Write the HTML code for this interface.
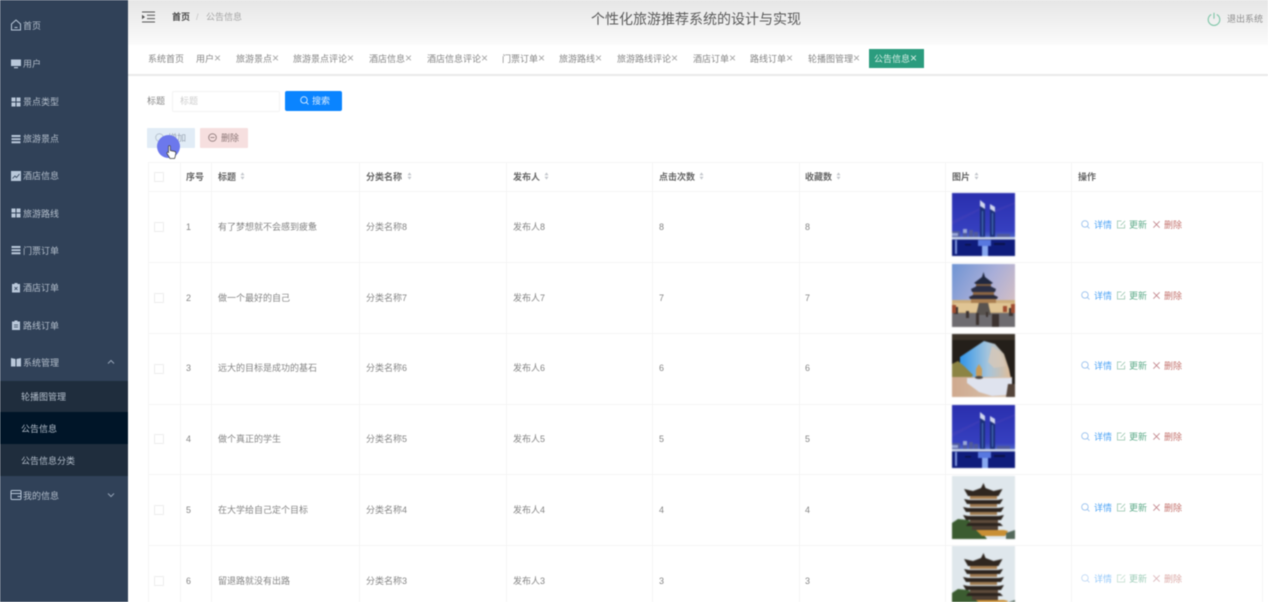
<!DOCTYPE html>
<html lang="zh"><head><meta charset="utf-8"><title>公告信息</title>
<style>
html,body{margin:0;padding:0;width:1268px;height:602px;overflow:hidden;background:#fff}
#p{position:relative;width:1268px;height:602px;overflow:hidden;font-family:"Liberation Sans","Noto Sans CJK SC",sans-serif;font-size:9px;color:#7d7d7d;filter:blur(.5px)}
#p div,#p span,#p svg{position:absolute}
.t{line-height:12px;white-space:nowrap}
.t i{font-style:normal;font-size:12px;color:#a5a5a5}
.m{color:#b3becb;font-size:9px;left:23px;margin-top:1px}
.s{color:#b3becb;font-size:9px;left:21px;margin-top:1px}
.tab{top:52px;color:#858585;font-size:9px}
.h{top:171px;color:#666;font-weight:bold;font-size:9px}
.c{color:#858585;font-size:9px}
.v{width:1px;background:#f5f5f5;top:162px;height:440px}
.l{left:148px;width:1114px;height:1px;background:#f5f5f5}
.cb{left:154px;width:8px;height:8px;border:1px solid #ececec;border-radius:1px;background:#fff}
.b{color:#4da3f5}.g{color:#62ad8c}.r{color:#c4746f}
.bi{color:#9cc2ee}.gi{color:#a3cbb6}.ri{color:#c48a90}
.so{width:5px;height:8px}
.im{filter:blur(.6px)}
</style></head><body><div id="p">
<svg width="0" height="0" style="left:0;top:0"><defs>
<linearGradient id="cs" x1="0" y1="0" x2="0" y2="1"><stop offset="0" stop-color="#2a2fae"/><stop offset=".6" stop-color="#3640c0"/><stop offset=".73" stop-color="#5570c8"/></linearGradient>
<linearGradient id="ts" x1="0" y1="0" x2="1" y2=".6"><stop offset="0" stop-color="#6f94d4"/><stop offset=".55" stop-color="#a9aed8"/><stop offset="1" stop-color="#d4bfc4"/></linearGradient>
<linearGradient id="as" x1="0" y1="0" x2="1" y2="0"><stop offset="0" stop-color="#2f95ea"/><stop offset=".55" stop-color="#a6c5dc"/><stop offset="1" stop-color="#e0bd98"/></linearGradient>
<linearGradient id="ab" x1="0" y1="0" x2="1" y2="0"><stop offset="0" stop-color="#cfa98e"/><stop offset="1" stop-color="#d9c6b2"/></linearGradient>
<symbol id="city" viewBox="0 0 63 63"><rect width="63" height="63" fill="url(#cs)"/><path d="M0 28L30 14v2L0 32zM40 18l23-9v2L40 21z" fill="#5a48b8" opacity=".25"/><rect y="46" width="63" height="17" fill="#0f1c7c"/><path d="M28 8l5 4v33h-5zM38 12l5 3v30h-5z" fill="#1b2f78"/><path d="M28 7l5 4v5l-5-3zM38 11l5 3v5l-5-3z" fill="#d0d6ee"/><path d="M30 18h1v25h-1zM40 20h1v22h-1z" fill="#4b78c8"/><path d="M0 38h8v7H0zM11 36h4v9h-4zM17 37h4v8h-4zM22 39h4v6h-4zM45 41h13v4H45z" fill="#4f5a9c"/><path d="M11 36h4v4h-4zM0 40h6v3H0z" fill="#9aa8d8"/><rect y="44" width="63" height="2.500" fill="#c8d4ea"/><rect x="30" y="47" width="6" height="16" fill="#88a8f0"/><rect x="26" y="47" width="13" height="6" fill="#5878e0"/><rect x="13" y="51" width="6" height="1.500" fill="#0b1248"/><rect x="42" y="50" width="11" height="2" fill="#0b1248"/><rect x="3" y="47" width="2" height="14" fill="#7f96e0"/></symbol>
<symbol id="temple" viewBox="0 0 63 63"><rect width="63" height="63" fill="url(#ts)"/><rect y="36" width="63" height="14" fill="#cdae7c"/><rect y="49" width="63" height="14" fill="#6e6c70"/><path d="M31.500 8l1.500 5 8 6-2 1H24l-2-1 8-6z" fill="#20273e"/><rect x="24" y="20" width="15" height="3" fill="#7a5a3e"/><path d="M19 25l6-3h13l6 3-1 3H20z" fill="#2a2e44"/><rect x="21" y="28" width="21" height="3" fill="#8a6544"/><path d="M17 33l4-2h21l4 2-1 2H18z" fill="#2c2d3e"/><rect x="19" y="35" width="25" height="4" fill="#a97e50"/><rect x="2" y="39" width="24" height="9" fill="#e0c594"/><rect x="37" y="39" width="24" height="9" fill="#e0c594"/><path d="M27 39h9l3 12H24z" fill="#58534f"/><path d="M2 43h4v7H2zM14 47h3v7h-3zM24 49h3v12h-3zM40 50h7v13h-7zM57 44h4v8h-4zM34 48h2v5h-2z" fill="#3c3330"/><path d="M0 41h4v8H0zM59 40h4v9h-4zM51 42h4v6h-4z" fill="#a04c30"/></symbol>
<symbol id="arch" viewBox="0 0 63 63"><rect width="63" height="63" fill="#241f1a"/><path d="M0 0h63v6H0z" fill="#3a3229"/><path d="M8 23L32 7l11 3 9 10 5 15 2 10H8z" fill="url(#as)"/><path d="M40 12l8 6 6 14-12 2-6-6z" fill="#d8c8b8" opacity=".75"/><path d="M0 30l6-3 6 5 9 9-2 3H0z" fill="#8c8444"/><path d="M0 43h60v8l-4 12H0z" fill="url(#ab)"/><path d="M15 44h45v8l-6 9-14 1-13-4-12-9z" fill="#dfe3ee"/><path d="M24 35l3-5 3 5v7h-6z" fill="#c89c58"/><ellipse cx="27" cy="43.500" rx="4" ry="1.500" fill="#4c443e"/><path d="M56 50h7v13h-9z" fill="#54443a"/></symbol>
<symbol id="tower" viewBox="0 0 63 63"><rect width="63" height="63" fill="#dfe7ec"/><path d="M0 47l6-4 10 1 8 5 11 14H0z" fill="#3b5c30"/><path d="M31.500 7l2 5 8 3 9-2-4 7H16l-4-7 9 2 8-3z" fill="#2f261f"/><rect x="18" y="20" width="27" height="3" fill="#a77f52"/><path d="M12 23l5 1h29l5-1-3 5H15z" fill="#2c241e"/><rect x="18" y="28" width="27" height="3" fill="#9b774f"/><path d="M11 31l5 1h31l5-1-3 5H14z" fill="#2c241e"/><rect x="18" y="36" width="27" height="3" fill="#a07c52"/><path d="M11 39l5 1h31l5-1-3 5H14z" fill="#2c241e"/><rect x="18" y="44" width="28" height="3" fill="#5d4a3a"/><path d="M16 47h32l3 3H14z" fill="#2c241e"/><rect x="20" y="50" width="26" height="4" fill="#4d3e33"/><path d="M24 54h28l4 1-3 5H30z" fill="#c98f34"/><path d="M54 57l9-3v9H54z" fill="#53685a"/></symbol>
<symbol id="sr" viewBox="0 0 10 10"><circle cx="4.400" cy="4.400" r="3.600" fill="none" stroke="currentColor" stroke-width="1"/><path d="M7 7l2.400 2.400" stroke="currentColor" stroke-width="1"/></symbol>
<symbol id="ed" viewBox="0 0 10 10"><path d="M8.500 5v4h-8v-8h4.500" fill="none" stroke="currentColor" stroke-width="1"/><path d="M4 6l5-5" stroke="currentColor" stroke-width="1"/></symbol>
<symbol id="xx" viewBox="0 0 10 10"><path d="M1.500 1.500l7 7M8.500 1.500l-7 7" stroke="currentColor" stroke-width="1"/></symbol>
<symbol id="st" viewBox="0 0 6 10"><path d="M3 .5l2.500 3.500h-5z" fill="#c4c7cc"/><path d="M3 9.500l2.500-3.500h-5z" fill="#c4c7cc"/></symbol>
<symbol id="gr" viewBox="0 0 10 10"><path d="M.5.5h4v4h-4zM5.500.5h4v4h-4zM.5 5.500h4v4h-4zM5.500 5.500h4v4h-4z" fill="#b9c8da"/></symbol>
<symbol id="ls" viewBox="0 0 10 10"><path d="M.5 1h9v2h-9zM.5 4.200h9v1.800h-9zM.5 7.300h9v2h-9z" fill="#b9c8da"/></symbol>
<symbol id="cp" viewBox="0 0 10 10"><path d="M1 1.500h2.500V.5h3v1H9v8.500H1z" fill="#b9c8da"/><path d="M3.500 4.500l3 3M6.500 4.500l-3 3" stroke="#304158" stroke-width=".8"/></symbol>
</defs></svg>

<!-- sidebar -->
<div style="left:0;top:0;width:128px;height:602px;background:#304158"></div>
<div style="left:0;top:381px;width:128px;height:31px;background:#1f2d3d"></div>
<div style="left:0;top:412px;width:128px;height:32px;background:#001528"></div>
<div style="left:0;top:444px;width:128px;height:32px;background:#1f2d3d"></div>

<svg style="left:10px;top:19px" width="12" height="12" viewBox="0 0 12 12"><path d="M1.500 5L6 1l4.500 4v6h-9zM4.500 8.500h3" fill="none" stroke="#b9c8da" stroke-width="1"/></svg>
<svg style="left:11px;top:59px" width="10" height="10" viewBox="0 0 10 10"><path d="M0 .5h10v6.500H0zM3 8h4v1.200H3z" fill="#b9c8da"/></svg>
<svg style="left:11px;top:97px" width="10" height="10"><use href="#gr"/></svg>
<svg style="left:11px;top:134px" width="10" height="10"><use href="#ls"/></svg>
<svg style="left:11px;top:171px" width="10" height="10" viewBox="0 0 10 10"><rect width="10" height="10" fill="#b9c8da"/><path d="M1.500 7.500L4 5l1.500 1.500L8.500 3" fill="none" stroke="#304158" stroke-width=".8"/></svg>
<svg style="left:11px;top:208px" width="10" height="10"><use href="#gr"/></svg>
<svg style="left:11px;top:245px" width="10" height="10"><use href="#ls"/></svg>
<svg style="left:11px;top:282px" width="10" height="11"><use href="#cp"/></svg>
<svg style="left:11px;top:320px" width="10" height="10" viewBox="0 0 10 10"><path d="M1 1.500h2.500V.5h3v1H9v8.500H1z" fill="#b9c8da"/><path d="M3 5h4M3 7h4" stroke="#304158" stroke-width=".8"/></svg>
<svg style="left:11px;top:357px" width="10" height="10" viewBox="0 0 10 10"><path d="M0 1l4.500 1v7.500H0zM5.500 2l4.500-1v8.500H5.500z" fill="#b9c8da"/></svg>
<svg style="left:10px;top:489px" width="12" height="12" viewBox="0 0 12 12"><rect x="1" y="1.500" width="10" height="9" rx="1" fill="none" stroke="#b9c8da"/><path d="M1 4.500h10M7.500 7.500H11" stroke="#b9c8da"/></svg>

<span class="t m" style="top:19px">首页</span>
<span class="t m" style="top:57px">用户</span>
<span class="t m" style="top:95px">景点类型</span>
<span class="t m" style="top:132px">旅游景点</span>
<span class="t m" style="top:169px">酒店信息</span>
<span class="t m" style="top:207px">旅游路线</span>
<span class="t m" style="top:244px">门票订单</span>
<span class="t m" style="top:281px">酒店订单</span>
<span class="t m" style="top:319px">路线订单</span>
<span class="t m" style="top:356px">系统管理</span>
<svg style="left:107px;top:359px" width="8" height="6" viewBox="0 0 8 6"><path d="M1 4.500l3-3 3 3" fill="none" stroke="#93a2b5"/></svg>
<span class="t s" style="top:390px">轮播图管理</span>
<span class="t s" style="top:422px">公告信息</span>
<span class="t s" style="top:454px">公告信息分类</span>
<span class="t m" style="top:489px">我的信息</span>
<svg style="left:107px;top:492px" width="8" height="6" viewBox="0 0 8 6"><path d="M1 1.500l3 3 3-3" fill="none" stroke="#93a2b5"/></svg>

<!-- header -->
<div style="left:128px;top:0;width:1140px;height:45px;background:linear-gradient(#e6e6e6,#fbfbfb)"></div>
<svg style="left:142px;top:11px" width="13" height="12" viewBox="0 0 13 12"><path d="M0 1h13M5 4.300h8M5 7.600h8M0 11h13" stroke="#555" stroke-width="1"/><path d="M0 3.800l3 2.200-3 2.200z" fill="#555"/></svg>
<span class="t" style="left:172px;top:11px;color:#4a4a4a;font-weight:bold">首页</span>
<span class="t" style="left:196px;top:11px;color:#c4c4c4">/</span>
<span class="t" style="left:206px;top:11px;color:#a5a5a5">公告信息</span>
<span class="t" style="left:591px;top:11px;font-size:14px;line-height:16px;color:#5a5a5a">个性化旅游推荐系统的设计与实现</span>
<svg style="left:1207px;top:12px" width="14" height="14" viewBox="0 0 14 14"><path d="M4.300 2.500a5.800 5.800 0 1 0 5.400 0M7 .8v6" fill="none" stroke="#86c8ac" stroke-width="1.200"/></svg>
<span class="t" style="left:1227px;top:13px;color:#8e8e8e">退出系统</span>

<!-- tabs -->
<div style="left:128px;top:74px;width:1140px;height:2px;background:#e9e9e9"></div>
<span class="t tab" style="left:148px;top:53px">系统首页</span>
<span class="t tab" style="left:196px">用户<i>×</i></span>
<span class="t tab" style="left:236px">旅游景点<i>×</i></span>
<span class="t tab" style="left:293px">旅游景点评论<i>×</i></span>
<span class="t tab" style="left:369px">酒店信息<i>×</i></span>
<span class="t tab" style="left:427px">酒店信息评论<i>×</i></span>
<span class="t tab" style="left:502px">门票订单<i>×</i></span>
<span class="t tab" style="left:559px">旅游路线<i>×</i></span>
<span class="t tab" style="left:617px">旅游路线评论<i>×</i></span>
<span class="t tab" style="left:693px">酒店订单<i>×</i></span>
<span class="t tab" style="left:750px">路线订单<i>×</i></span>
<span class="t tab" style="left:808px">轮播图管理<i>×</i></span>
<div style="left:869px;top:49px;width:55px;height:19px;background:#2b9c7e"></div>
<span class="t tab" style="left:874px;color:#d8eee6">公告信息<i style="color:#d8eee6">×</i></span>

<!-- search -->
<span class="t" style="left:147px;top:95px;color:#888">标题</span>
<div style="left:172px;top:91px;width:106px;height:19px;border:1px solid #f3f3f3;border-radius:2px"></div>
<span class="t" style="left:180px;top:95px;color:#cfcfcf">标题</span>
<div style="left:285px;top:91px;width:57px;height:20px;background:#0a84ff;border-radius:2px"></div>
<svg style="left:300px;top:96px;color:#d5eaff" width="9" height="9"><use href="#sr"/></svg>
<span class="t" style="left:312px;top:95px;color:#d5eaff">搜索</span>

<!-- buttons -->
<div style="left:147px;top:128px;width:48px;height:20px;background:#e1ecf6;border-radius:1px"></div>
<span class="t" style="left:168px;top:132px;color:#9aa6b5">增加</span>
<svg style="left:155px;top:133px" width="9" height="9" viewBox="0 0 9 9"><circle cx="4.500" cy="4.500" r="3.800" fill="none" stroke="#b8c4d0"/></svg>
<div style="left:200px;top:128px;width:48px;height:20px;background:#f6dfdf;border-radius:1px"></div>
<svg style="left:208px;top:133px" width="9" height="9" viewBox="0 0 9 9"><circle cx="4.500" cy="4.500" r="3.800" fill="none" stroke="#9a8585"/><path d="M2.500 4.500h4" stroke="#9a8585"/></svg>
<span class="t" style="left:221px;top:132px;color:#8d7878">删除</span>
<div style="left:157px;top:135px;width:23px;height:23px;border-radius:50%;background:#6c78ec"></div>
<svg style="left:166px;top:145px" width="11" height="14" viewBox="0 0 11 14"><path d="M2.500 1.500c0-1.200 1.800-1.200 1.800 0v4l4 .8c1.200.3 1.700 1 1.500 2.200l-.7 3.500-.6 1.500H4L1 8.500c-.6-1 .5-1.800 1.500-1z" fill="#fff" stroke="#444" stroke-width=".8"/></svg>

<!-- table grid -->
<div class="l" style="top:162px"></div>
<div class="l" style="top:191px"></div>
<div class="l" style="top:262px"></div>
<div class="l" style="top:333px"></div>
<div class="l" style="top:404px"></div>
<div class="l" style="top:474px"></div>
<div class="l" style="top:545px"></div>
<div class="v" style="left:148px"></div>
<div class="v" style="left:180px"></div>
<div class="v" style="left:211px"></div>
<div class="v" style="left:359px"></div>
<div class="v" style="left:506px"></div>
<div class="v" style="left:652px"></div>
<div class="v" style="left:799px"></div>
<div class="v" style="left:945px"></div>
<div class="v" style="left:1071px"></div>
<div class="v" style="left:1262px"></div>

<!-- head -->
<div class="cb" style="top:172px"></div>
<span class="t h" style="left:186px;top:171px">序号</span>
<span class="t h" style="left:218px">标题</span><svg class="so" style="left:240px;top:172px"><use href="#st"/></svg>
<span class="t h" style="left:366px">分类名称</span><svg class="so" style="left:407px;top:172px"><use href="#st"/></svg>
<span class="t h" style="left:513px">发布人</span><svg class="so" style="left:544px;top:172px"><use href="#st"/></svg>
<span class="t h" style="left:659px">点击次数</span><svg class="so" style="left:699px;top:172px"><use href="#st"/></svg>
<span class="t h" style="left:805px">收藏数</span><svg class="so" style="left:836px;top:172px"><use href="#st"/></svg>
<span class="t h" style="left:952px">图片</span><svg class="so" style="left:974px;top:172px"><use href="#st"/></svg>
<span class="t h" style="left:1078px">操作</span>

<!-- row 1 -->
<div class="cb" style="top:222px"></div>
<span class="t c" style="left:186px;top:221px">1</span>
<span class="t c" style="left:218px;top:221px">有了梦想就不会感到疲惫</span>
<span class="t c" style="left:366px;top:221px">分类名称8</span>
<span class="t c" style="left:513px;top:221px">发布人8</span>
<span class="t c" style="left:659px;top:221px">8</span>
<span class="t c" style="left:805px;top:221px">8</span>
<svg class="im" style="left:952px;top:193px" width="63" height="63"><use href="#city"/></svg>
<svg class="bi" style="left:1081px;top:220px" width="9" height="9"><use href="#sr"/></svg><span class="t b" style="left:1094px;top:219px">详情</span>
<svg class="gi" style="left:1117px;top:220px" width="9" height="9"><use href="#ed"/></svg><span class="t g" style="left:1129px;top:219px">更新</span>
<svg class="ri" style="left:1152px;top:220px" width="9" height="9"><use href="#xx"/></svg><span class="t r" style="left:1164px;top:219px">删除</span>

<!-- row 2 -->
<div class="cb" style="top:293px"></div>
<span class="t c" style="left:186px;top:292px">2</span>
<span class="t c" style="left:218px;top:292px">做一个最好的自己</span>
<span class="t c" style="left:366px;top:292px">分类名称7</span>
<span class="t c" style="left:513px;top:292px">发布人7</span>
<span class="t c" style="left:659px;top:292px">7</span>
<span class="t c" style="left:805px;top:292px">7</span>
<svg class="im" style="left:952px;top:264px" width="63" height="63"><use href="#temple"/></svg>
<svg class="bi" style="left:1081px;top:291px" width="9" height="9"><use href="#sr"/></svg><span class="t b" style="left:1094px;top:290px">详情</span>
<svg class="gi" style="left:1117px;top:291px" width="9" height="9"><use href="#ed"/></svg><span class="t g" style="left:1129px;top:290px">更新</span>
<svg class="ri" style="left:1152px;top:291px" width="9" height="9"><use href="#xx"/></svg><span class="t r" style="left:1164px;top:290px">删除</span>

<!-- row 3 -->
<div class="cb" style="top:364px"></div>
<span class="t c" style="left:186px;top:362px">3</span>
<span class="t c" style="left:218px;top:362px">远大的目标是成功的基石</span>
<span class="t c" style="left:366px;top:362px">分类名称6</span>
<span class="t c" style="left:513px;top:362px">发布人6</span>
<span class="t c" style="left:659px;top:362px">6</span>
<span class="t c" style="left:805px;top:362px">6</span>
<svg class="im" style="left:952px;top:334px" width="63" height="63"><use href="#arch"/></svg>
<svg class="bi" style="left:1081px;top:361px" width="9" height="9"><use href="#sr"/></svg><span class="t b" style="left:1094px;top:360px">详情</span>
<svg class="gi" style="left:1117px;top:361px" width="9" height="9"><use href="#ed"/></svg><span class="t g" style="left:1129px;top:360px">更新</span>
<svg class="ri" style="left:1152px;top:361px" width="9" height="9"><use href="#xx"/></svg><span class="t r" style="left:1164px;top:360px">删除</span>

<!-- row 4 -->
<div class="cb" style="top:434px"></div>
<span class="t c" style="left:186px;top:433px">4</span>
<span class="t c" style="left:218px;top:433px">做个真正的学生</span>
<span class="t c" style="left:366px;top:433px">分类名称5</span>
<span class="t c" style="left:513px;top:433px">发布人5</span>
<span class="t c" style="left:659px;top:433px">5</span>
<span class="t c" style="left:805px;top:433px">5</span>
<svg class="im" style="left:952px;top:405px" width="63" height="63"><use href="#city"/></svg>
<svg class="bi" style="left:1081px;top:432px" width="9" height="9"><use href="#sr"/></svg><span class="t b" style="left:1094px;top:431px">详情</span>
<svg class="gi" style="left:1117px;top:432px" width="9" height="9"><use href="#ed"/></svg><span class="t g" style="left:1129px;top:431px">更新</span>
<svg class="ri" style="left:1152px;top:432px" width="9" height="9"><use href="#xx"/></svg><span class="t r" style="left:1164px;top:431px">删除</span>

<!-- row 5 -->
<div class="cb" style="top:505px"></div>
<span class="t c" style="left:186px;top:504px">5</span>
<span class="t c" style="left:218px;top:504px">在大学给自己定个目标</span>
<span class="t c" style="left:366px;top:504px">分类名称4</span>
<span class="t c" style="left:513px;top:504px">发布人4</span>
<span class="t c" style="left:659px;top:504px">4</span>
<span class="t c" style="left:805px;top:504px">4</span>
<svg class="im" style="left:952px;top:476px" width="63" height="63"><use href="#tower"/></svg>
<svg class="bi" style="left:1081px;top:503px" width="9" height="9"><use href="#sr"/></svg><span class="t b" style="left:1094px;top:502px">详情</span>
<svg class="gi" style="left:1117px;top:503px" width="9" height="9"><use href="#ed"/></svg><span class="t g" style="left:1129px;top:502px">更新</span>
<svg class="ri" style="left:1152px;top:503px" width="9" height="9"><use href="#xx"/></svg><span class="t r" style="left:1164px;top:502px">删除</span>

<!-- row 6 -->
<div class="cb" style="top:576px"></div>
<span class="t c" style="left:186px;top:575px">6</span>
<span class="t c" style="left:218px;top:575px">留退路就没有出路</span>
<span class="t c" style="left:366px;top:575px">分类名称3</span>
<span class="t c" style="left:513px;top:575px">发布人3</span>
<span class="t c" style="left:659px;top:575px">3</span>
<span class="t c" style="left:805px;top:575px">3</span>
<svg class="im" style="left:952px;top:546px" width="63" height="63"><use href="#tower"/></svg>
<svg class="bi" style="left:1081px;top:574px;opacity:.6" width="9" height="9"><use href="#sr"/></svg><span class="t b" style="left:1094px;top:573px;opacity:.6">详情</span>
<svg class="gi" style="left:1117px;top:574px;opacity:.6" width="9" height="9"><use href="#ed"/></svg><span class="t g" style="left:1129px;top:573px;opacity:.6">更新</span>
<svg class="ri" style="left:1152px;top:574px;opacity:.6" width="9" height="9"><use href="#xx"/></svg><span class="t r" style="left:1164px;top:573px;opacity:.6">删除</span>
</div></body></html>
